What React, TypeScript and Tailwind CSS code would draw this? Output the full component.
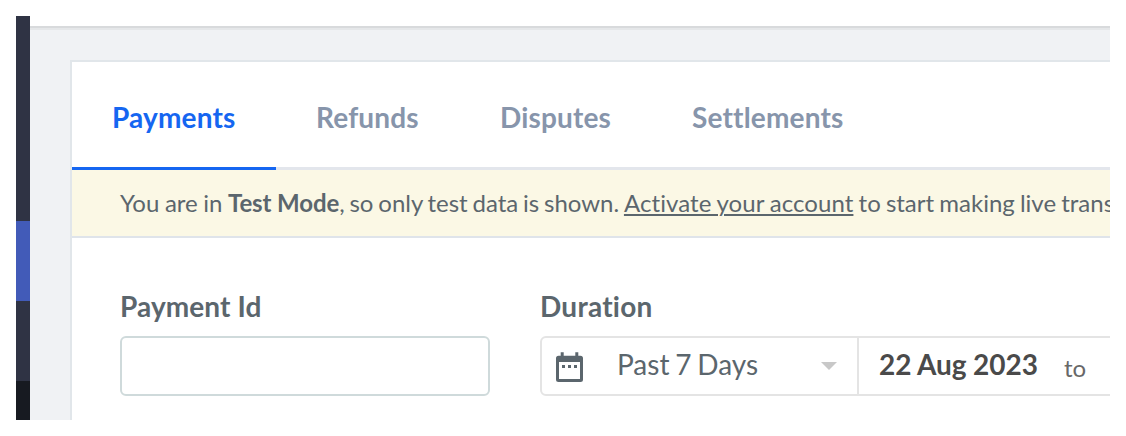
const tabs = [
  { label: "Payments", width: "w-[204px]" },
  { label: "Refunds", width: "w-[184px]" },
  { label: "Disputes", width: "w-[192px]" },
  { label: "Settlements", width: "w-[232px]" },
];

function Sidebar() {
  return (
    <aside className="flex w-[14px] shrink-0 flex-col bg-[#2f3344]">
      <div className="h-[205px]" />
      <div className="h-20 bg-[#425bb8]" />
      <div className="h-20" />
      <div className="flex-1 bg-[#171a21]" />
    </aside>
  );
}

function TabBar() {
  return (
    <nav className="flex h-[108px] border-b-[3px] border-[#e3e6ec]">
      {tabs.map((tab, i) => (
        <button
          key={tab.label}
          className={`-mb-[3px] shrink-0 border-b-[3px] pl-10 pt-[5px] text-left text-[28px] font-bold tracking-[0.17px] ${tab.width} ${
            i === 0 ? "border-[#1566f1] text-[#1566f1]" : "border-transparent text-[#8795ab]"
          }`}
        >
          {tab.label}
        </button>
      ))}
    </nav>
  );
}

function TestModeBanner() {
  return (
    <div className="h-[68px] overflow-hidden whitespace-nowrap border-b-2 border-[#dfe4ea] bg-[#fbf8e5] pl-12 text-2xl leading-[66px] [word-spacing:-0.6px]">
      You are in <b className="tracking-[-0.1px] [word-spacing:0px]">Test Mode</b>
      <span className="[word-spacing:-1.35px]">, so only test data is shown. </span>
      <a className="tracking-[0.08px] underline decoration-2 underline-offset-2">Activate your account</a>
      <span className="[word-spacing:-1px]"> to start making live transactions.</span>
    </div>
  );
}

function CalendarIcon() {
  return (
    <svg width="29" height="34" viewBox="0 0 29 34" fill="none" className="shrink-0">
      <path
        fill="#5b666d"
        fillRule="evenodd"
        d="M5.700 3.300h3v3.400h11.600V3.300h3v3.400H25.500A2.500 2.500 0 0 1 28 9.200V30.500a2.500 2.500 0 0 1-2.500 2.500h-22A2.500 2.500 0 0 1 1 30.500V9.200A2.500 2.500 0 0 1 3.500 6.700H5.700V3.300ZM4 13v17h21V13H4Z"
      />
      <path fill="#5b666d" d="M7 16h3v3H7zM13 16h3v3h-3zM19 16h3v3h-3z" />
    </svg>
  );
}

function Filters() {
  return (
    <div className="flex pl-12 pt-[50px]">
      <div className="w-[370px] shrink-0">
        <label className="block h-12 text-[28px] font-bold leading-9 tracking-[0.1px]">Payment Id</label>
        <input className="block h-[60px] w-full rounded-md border-2 border-[#cfdadb] bg-white" />
      </div>
      <div className="ml-[50px] w-[700px] shrink-0">
        <label className="block h-12 text-[28px] font-bold leading-9 tracking-[0.25px]">Duration</label>
        <div className="flex h-[60px] rounded-md border-2 border-[#e4e4e4]">
          <div className="flex w-[317px] shrink-0 items-center border-r-2 border-[#e4e4e4] pl-[13px]">
            <CalendarIcon />
            <span className="ml-[33px] w-[204px] pb-1 text-[28px] leading-[52px] [word-spacing:-1.4px]">Past 7 Days</span>
            <svg width="16" height="8" viewBox="0 0 16 8" className="shrink-0">
              <path fill="#c8c8c8" d="M0 0h16L8 8z" />
            </svg>
          </div>
          <span className="ml-5 w-[185px] text-[28px] font-bold leading-[52px] text-[#4a4a4a] [word-spacing:-0.4px]">22 Aug 2023</span>
          <span className="pt-1 text-2xl leading-[52px] text-[#686868]">to</span>
        </div>
      </div>
    </div>
  );
}

export default function App() {
  return (
    <div className="h-[436px] w-[1126px] bg-white p-4 font-['Lato',sans-serif] text-[#5b666d] [font-variant-ligatures:none]">
      <div className="flex h-full overflow-hidden">
        <Sidebar />
        <div className="min-w-0 flex-1 bg-[#f0f2f4]">
          <header className="h-3 border-b-2 border-[#d8dadc] bg-white" />
          <div className="h-0.5 bg-[#e5e7e9]" />
          <main className="ml-10 mt-[30px] h-[360px] border-l-2 border-t-2 border-[#e1e6ea] bg-white">
            <TabBar />
            <TestModeBanner />
            <Filters />
          </main>
        </div>
      </div>
    </div>
  );
}
